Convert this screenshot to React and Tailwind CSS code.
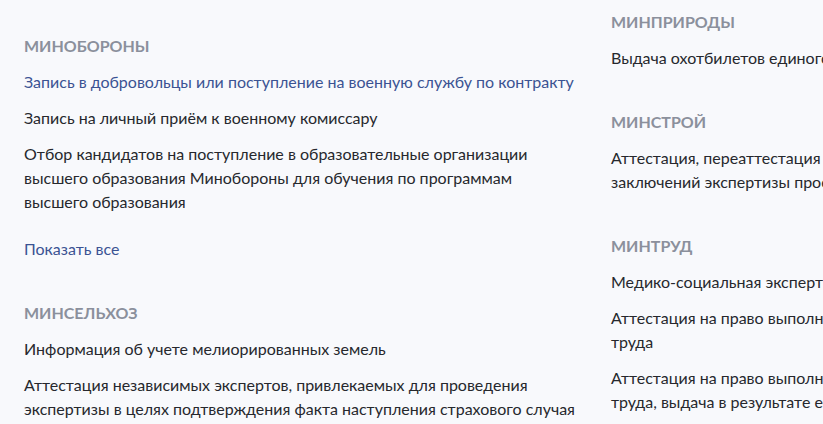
export default function App() {
  const H = ({ children }) => (
    <div className="text-[16px] leading-6 font-bold uppercase text-[#8b909c]">{children}</div>
  );
  const I = ({ children, link }) => (
    <div className={"text-[16px] leading-6 " + (link ? "text-[#3b5393]" : "text-[#26282d]")}>{children}</div>
  );
  return (
    <div className="w-[823px] h-[424px] overflow-hidden bg-[#f8f9fc] flex gap-[34px] pl-6" style={{ fontFamily: "Lato, 'Noto Sans', sans-serif" }}>
      <div className="w-[553px] shrink-0 pt-[34px] flex flex-col">
        <div className="flex flex-col gap-3">
          <H>Минобороны</H>
          <I link>Запись в добровольцы или поступление на военную службу по контракту</I>
          <I>Запись на личный приём к военному комиссару</I>
          <I>Отбор кандидатов на поступление в образовательные организации высшего образования Минобороны для обучения по программам высшего образования</I>
        </div>
        <div className="mt-[23px] text-[16px] leading-6 text-[#3b5393]">Показать все</div>
        <div className="mt-10 flex flex-col gap-3">
          <H>Минсельхоз</H>
          <I>Информация об учете мелиорированных земель</I>
          <I>Аттестация независимых экспертов, привлекаемых для проведения экспертизы в целях подтверждения факта наступления страхового случая</I>
        </div>
      </div>
      <div className="w-[553px] shrink-0 pt-[10px] flex flex-col">
        <div className="flex flex-col gap-3">
          <H>Минприроды</H>
          <I>Выдача охотбилетов единого федерального образца</I>
        </div>
        <div className="mt-10 flex flex-col gap-3">
          <H>Минстрой</H>
          <I>Аттестация, переаттестация физических лиц на право подготовки заключений экспертизы проектной документации</I>
        </div>
        <div className="mt-10 flex flex-col gap-3">
          <H>Минтруд</H>
          <I>Медико-социальная экспертиза</I>
          <I>Аттестация на право выполнения работ по специальной оценке условий труда</I>
          <I>Аттестация на право выполнения работ по специальной оценке условий труда, выдача в результате её проведения квалификационного аттестата эксперта</I>
        </div>
      </div>
    </div>
  );
}
